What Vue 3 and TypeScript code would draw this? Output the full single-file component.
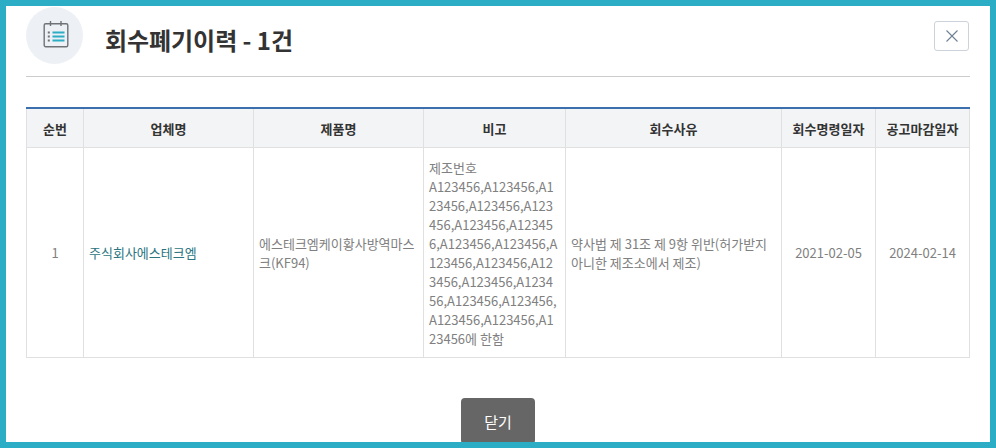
<script setup lang="ts">
interface Col { label: string; width: number }
const cols: Col[] = [
  { label: '순번', width: 57 },
  { label: '업체명', width: 170 },
  { label: '제품명', width: 170 },
  { label: '비고', width: 142 },
  { label: '회수사유', width: 216 },
  { label: '회수명령일자', width: 94 },
  { label: '공고마감일자', width: 94 },
]
const lots = Array(19).fill('A123456').join(',') + '에 한함'
</script>

<template>
  <div class="modal">
    <header class="head">
      <div class="badge">
        <svg width="26" height="27" viewBox="0 0 26 27" fill="none">
          <rect x="1.2" y="2.7" width="23.6" height="23" rx="1.5" stroke="#6f7378" stroke-width="1.4" />
          <path d="M7.5 0v5M18 0v5" stroke="#6f7378" stroke-width="1.4" />
          <path d="M9.5 11.5h12M9.5 15.5h12M9.5 19.5h12" stroke="#2badc6" stroke-width="1.8" />
          <path d="M4.8 11.5h2M4.8 15.5h2M4.8 19.5h2" stroke="#6f7378" stroke-width="1.8" />
        </svg>
      </div>
      <h1 class="title">회수폐기이력 - 1건</h1>
      <button class="close" type="button" aria-label="닫기">
        <svg width="12" height="12" viewBox="0 0 12 12" fill="none">
          <path d="M.5.5l11 11M11.5.5l-11 11" stroke="#6d8196" stroke-width="1.1" />
        </svg>
      </button>
    </header>

    <table class="grid">
      <colgroup>
        <col v-for="c in cols" :key="c.label" :style="{ width: c.width + 'px' }" />
      </colgroup>
      <thead>
        <tr><th v-for="c in cols" :key="c.label">{{ c.label }}</th></tr>
      </thead>
      <tbody>
        <tr>
          <td class="single center">1</td>
          <td class="single company">주식회사에스테크엠</td>
          <td>에스테크엠케이황사방역마스크(KF94)</td>
          <td>제조번호<br />{{ lots }}</td>
          <td>약사법 제 31조 제 9항 위반(허가받지 아니한 제조소에서 제조)</td>
          <td class="single center">2021-02-05</td>
          <td class="single center">2024-02-14</td>
        </tr>
      </tbody>
    </table>

    <div class="foot">
      <button class="confirm" type="button">닫기</button>
    </div>
  </div>
</template>

<style>
html, body { margin: 0; background: #fff; }
</style>

<style scoped>
.modal {
  box-sizing: border-box;
  width: 996px;
  height: 448px;
  overflow: hidden;
  border: 6px solid #2badc6;
  padding: 1px 20px 0;
  background: #fff;
  font-family: "Noto Sans CJK KR", "Noto Sans", sans-serif;
  color: #808080;
}
.head {
  display: flex;
  align-items: flex-start;
  height: 69px;
  border-bottom: 1px solid #ccc;
  margin-bottom: 30px;
}
.badge {
  flex: none;
  display: flex;
  align-items: center;
  justify-content: center;
  width: 57px;
  height: 57px;
  border-radius: 50%;
  background: #edf0f4;
}
.badge svg { display: block; margin: 0 0 2px 2px; }
.title {
  flex: 1;
  margin: 15px 0 0 22px;
  font-size: 24px;
  line-height: 36px;
  font-weight: 700;
  letter-spacing: -0.05px;
  color: #333;
}
.close {
  display: flex;
  align-items: center;
  justify-content: center;
  width: 35px;
  height: 30px;
  margin: 14px 1px 0 0;
  padding: 0;
  border: 1px solid #ccd3da;
  border-radius: 3px;
  background: #fff;
}
.grid {
  width: 943px;
  table-layout: fixed;
  border-collapse: collapse;
  border-top: 2px solid #3b6fae;
  font-size: 13px;
  line-height: 19px;
}
th, td {
  border: 1px solid #e0e0e0;
  word-break: break-all;
}
thead tr:first-child th { border-top: 0; }
th {
  height: 38px;
  padding: 0;
  background: #f2f4f6;
  color: #333;
  font-weight: 700;
  text-align: center;
}
td {
  padding: 10px 5px 9px;
  vertical-align: middle;
  color: #808080;
}
td.single { padding: 9px 5px 10px; }
.center { text-align: center; }
td.company { color: #2b7480; }
.foot {
  display: flex;
  justify-content: center;
  margin-top: 40px;
}
.confirm {
  width: 74px;
  height: 46px;
  padding: 0;
  border: 0;
  border-radius: 4px;
  background: #666;
  color: #fff;
  font-family: inherit;
  font-size: 15px;
}
</style>
